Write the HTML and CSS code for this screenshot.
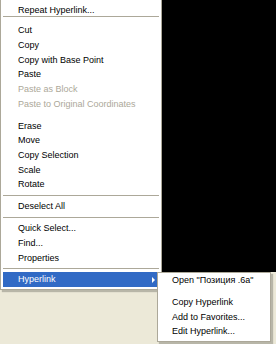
FILE: index.html
```html
<!DOCTYPE html>
<html>
<head>
<meta charset="utf-8">
<link rel="stylesheet" href="styles.css">
</head>
<body>
<div class="screen">
  <div class="top">
    <div class="menu main">
      <div class="item first">Repeat Hyperlink...</div>
      <div class="sep top-sep"></div>
      <div class="item">Cut</div>
      <div class="item">Copy</div>
      <div class="item">Copy with Base Point</div>
      <div class="item">Paste</div>
      <div class="item disabled">Paste as Block</div>
      <div class="item disabled">Paste to Original Coordinates</div>
      <div class="sep blank"></div>
      <div class="item">Erase</div>
      <div class="item">Move</div>
      <div class="item">Copy Selection</div>
      <div class="item">Scale</div>
      <div class="item">Rotate</div>
      <div class="sep"></div>
      <div class="item">Deselect All</div>
      <div class="sep"></div>
      <div class="item">Quick Select...</div>
      <div class="item">Find...</div>
      <div class="item">Properties</div>
      <div class="sep"></div>
      <div class="item active">Hyperlink<span class="arrow"></span></div>
    </div>
    <div class="canvas"></div>
  </div>
  <div class="menu sub">
    <div class="item">Open "Позиция .6a"</div>
    <div class="sep blank"></div>
    <div class="item">Copy Hyperlink</div>
    <div class="item">Add to Favorites...</div>
    <div class="item">Edit Hyperlink...</div>
  </div>
</div>
</body>
</html>
```
FILE: styles.css
```css
html, body {
  margin: 0;
  padding: 0;
}
body {
  width: 276px;
  height: 344px;
  overflow: hidden;
  background: #ece9d8;
  font-family: "Liberation Sans", Arial, sans-serif;
  font-size: 9px;
  color: #000;
}
.screen {
  position: relative;
  width: 276px;
  height: 344px;
  background: #ece9d8;
}
.top {
  display: flex;
  align-items: flex-start;
}
.menu {
  background: #fff;
  border: 1px solid #aca899;
  display: flex;
  flex-direction: column;
}
.main {
  width: 156px;
  border-top: none;
  padding: 0 2px 2px 2px;
  box-shadow: 2px 2px 1px rgba(0, 0, 0, 0.22);
}
.canvas {
  flex: 1;
  height: 272px;
  background: #000;
}
.item {
  height: 14.667px;
  line-height: 14.667px;
  padding-left: 15px;
  white-space: nowrap;
  position: relative;
}
.item.first {
  margin-top: 3px;
  height: 10px;
  line-height: 14px;
}
.item.disabled {
  color: #aca899;
}
.item.active {
  background: #316ac5;
  color: #fff;
}
.arrow {
  position: absolute;
  right: 4px;
  top: 5px;
  width: 0;
  height: 0;
  border-top: 3px solid transparent;
  border-bottom: 3px solid transparent;
  border-left: 3px solid #fff;
}
.sep {
  height: 7.333px;
  display: flex;
  align-items: center;
}
.sep::before {
  content: "";
  flex: 1;
  height: 1px;
  background: #aca899;
}
.sep.top-sep {
  height: 10.333px;
  align-items: flex-start;
}
.sep.top-sep::before {
  margin-top: 3px;
}
.sep.blank::before {
  background: transparent;
}
.sub {
  position: absolute;
  left: 157px;
  top: 272px;
  width: 108px;
  padding: 0 2px 2px 2px;
  box-shadow: 2px 2px 1px rgba(0, 0, 0, 0.22);
}
.sub .item {
  padding-left: 12px;
}
```
